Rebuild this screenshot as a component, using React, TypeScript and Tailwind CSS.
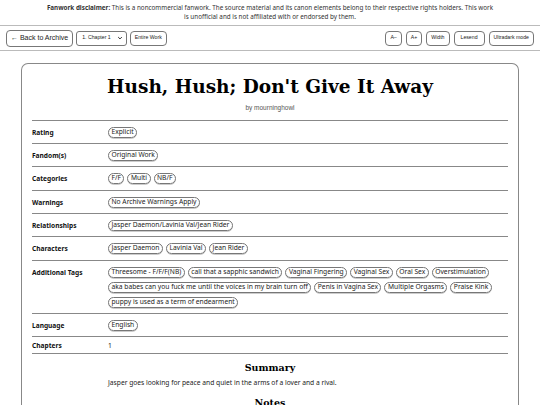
const tagRows: { label: string; tags?: string[]; text?: string }[] = [
  { label: 'Rating', tags: ['Explicit'] },
  { label: 'Fandom(s)', tags: ['Original Work'] },
  { label: 'Categories', tags: ['F/F', 'Multi', 'NB/F'] },
  { label: 'Warnings', tags: ['No Archive Warnings Apply'] },
  { label: 'Relationships', tags: ['Jasper Daemon/Lavinia Val/Jean Rider'] },
  { label: 'Characters', tags: ['Jasper Daemon', 'Lavinia Val', 'Jean Rider'] },
  {
    label: 'Additional Tags',
    tags: [
      'Threesome - F/F/F(NB)',
      'call that a sapphic sandwich',
      'Vaginal Fingering',
      'Vaginal Sex',
      'Oral Sex',
      'Overstimulation',
      'aka babes can you fuck me until the voices in my brain turn off',
      'Penis in Vagina Sex',
      'Multiple Orgasms',
      'Praise Kink',
      'puppy is used as a term of endearment',
    ],
  },
  { label: 'Language', tags: ['English'] },
  { label: 'Chapters', text: '1' },
];

function Tag({ children }: { children: string }) {
  return (
    <span className="inline-flex h-[11px] items-center whitespace-nowrap rounded-full border border-[#777] px-[2.5px] text-[6.7px] leading-none text-[#222] shadow-[0_0.5px_0_#999]">
      {children}
    </span>
  );
}

function ToolButton({ children, wide }: { children: string; wide?: boolean }) {
  return (
    <button
      className={`h-[15px] rounded-[4px] border border-[#777] bg-white font-['Liberation_Sans',sans-serif] text-[5.2px] text-[#222] ${wide ? 'px-[6px]' : 'px-[4px]'}`}
    >
      {children}
    </button>
  );
}

export default function App() {
  return (
    <div className="min-h-screen bg-white font-['Noto_Sans',sans-serif] text-[#222]">
      <div className="border-b border-[#bbb] pt-[3px] pb-[4px] text-center text-[6.3px] leading-[9px] text-[#333]">
        <div className="whitespace-nowrap">
          <b>Fanwork disclaimer:</b> This is a noncommercial fanwork. The source material and its canon elements belong to their respective rights holders. This work
        </div>
        <div>is unofficial and is not affiliated with or endorsed by them.</div>
      </div>

      <div className="flex h-[25px] items-center justify-between border-b border-[#bbb] px-[6px]">
        <div className="flex items-center gap-[3px]">
          <button className="h-[17px] rounded-[4px] border border-[#777] bg-white px-[4px] font-['Liberation_Sans',sans-serif] text-[7px] text-[#222]">
            ← Back to Archive
          </button>
          <div className="flex h-[15px] items-center rounded-[3px] border border-[#777] bg-white pl-[5px] pr-[3px] font-['Liberation_Sans',sans-serif] text-[5.2px]">
            <span>1. Chapter 1</span>
            <svg width="6" height="6" viewBox="0 0 10 10" className="ml-[6px]">
              <path d="M2 3.5 L5 6.5 L8 3.5" fill="none" stroke="#222" strokeWidth="1.6" />
            </svg>
          </div>
          <ToolButton>Entire Work</ToolButton>
        </div>
        <div className="flex items-center gap-[4px]">
          <ToolButton>A–</ToolButton>
          <ToolButton>A+</ToolButton>
          <ToolButton>Width</ToolButton>
          <ToolButton wide>Lesend</ToolButton>
          <ToolButton>Ultradark mode</ToolButton>
        </div>
      </div>

      <div className="mx-[21px] mt-[12px] rounded-t-[7px] border border-b-0 border-[#888] px-[10px] pt-[10px] pb-[20px]">
        <h1 className="text-center font-['DejaVu_Serif',serif] text-[18.5px] font-bold leading-[26px] text-black">
          Hush, Hush; Don&apos;t Give It Away
        </h1>
        <div className="mt-[3px] mb-[7px] text-center font-['Liberation_Sans',sans-serif] text-[6.5px] text-[#555]">
          by mourninghowl
        </div>

        <div className="border-t border-[#888]">
          {tagRows.map((row) => (
            <div
              key={row.label}
              className={`flex border-b border-[#888] ${row.text ? 'pt-[3px] pb-[2px]' : 'pt-[6px] pb-[5.3px]'}`}
            >
              <div className="w-[76px] shrink-0 text-[6.6px] font-bold leading-[11px] text-[#111]">{row.label}</div>
              {row.tags ? (
                <div className="flex flex-1 flex-wrap gap-x-[3px] gap-y-[4px]">
                  {row.tags.map((t) => (
                    <Tag key={t}>{t}</Tag>
                  ))}
                </div>
              ) : (
                <div className="text-[6.7px] leading-[11px] text-[#222]">{row.text}</div>
              )}
            </div>
          ))}
        </div>

        <h2 className="mt-[7px] text-center font-['DejaVu_Serif',serif] text-[9.5px] font-bold leading-[14px] text-black">
          Summary
        </h2>
        <p className="mt-[3px] pl-[76px] text-[6.7px] leading-[10px] text-[#222]">
          Jasper goes looking for peace and quiet in the arms of a lover and a rival.
        </p>
        <h2 className="mt-[8px] text-center font-['DejaVu_Serif',serif] text-[9.5px] font-bold leading-[14px] text-black">
          Notes
        </h2>
      </div>
    </div>
  );
}
